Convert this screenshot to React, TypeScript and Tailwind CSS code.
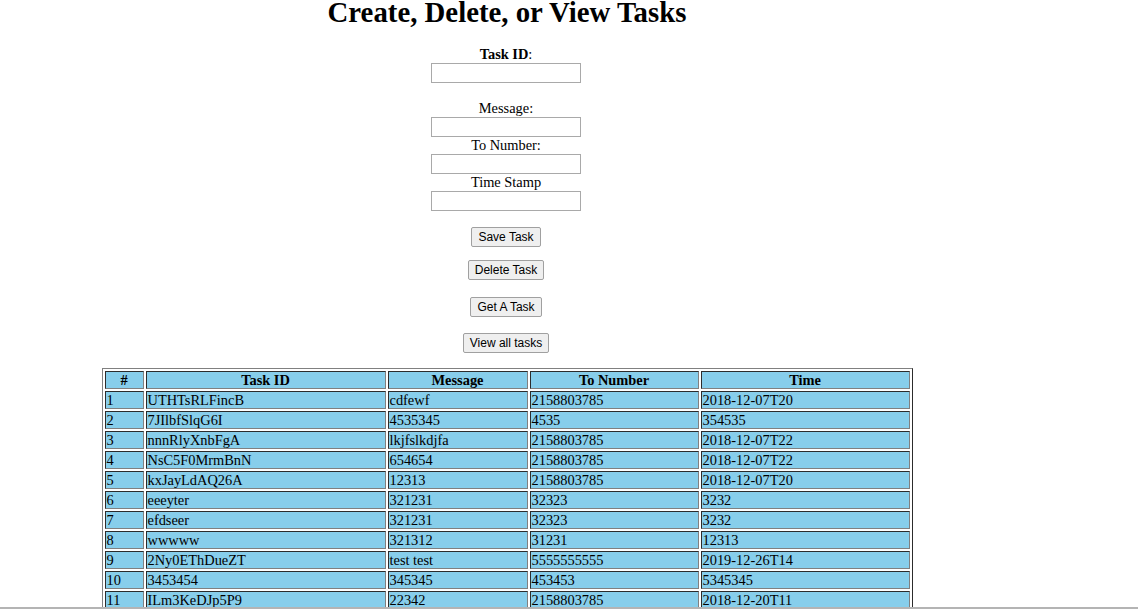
import React from "react"

interface TaskRow {
  id: number
  taskId: string
  message: string
  toNumber: string
  time: string
}

const tasks: TaskRow[] = [
  { id: 1,  taskId: "UTHTsRLFincB", message: "cdfewf",      toNumber: "2158803785", time: "2018-12-07T20" },
  { id: 2,  taskId: "7JIlbfSlqG6I", message: "4535345",     toNumber: "4535",       time: "354535" },
  { id: 3,  taskId: "nnnRlyXnbFgA", message: "lkjfslkdjfa", toNumber: "2158803785", time: "2018-12-07T22" },
  { id: 4,  taskId: "NsC5F0MrmBnN", message: "654654",      toNumber: "2158803785", time: "2018-12-07T22" },
  { id: 5,  taskId: "kxJayLdAQ26A", message: "12313",       toNumber: "2158803785", time: "2018-12-07T20" },
  { id: 6,  taskId: "eeeyter",      message: "321231",      toNumber: "32323",      time: "3232" },
  { id: 7,  taskId: "efdseer",      message: "321231",      toNumber: "32323",      time: "3232" },
  { id: 8,  taskId: "wwwww",        message: "321312",      toNumber: "31231",      time: "12313" },
  { id: 9,  taskId: "2Ny0EThDueZT", message: "test test",   toNumber: "5555555555", time: "2019-12-26T14" },
  { id: 10, taskId: "3453454",      message: "345345",      toNumber: "453453",     time: "5345345" },
  { id: 11, taskId: "ILm3KeDJp5P9", message: "22342",       toNumber: "2158803785", time: "2018-12-20T11" },
]

const cell = "border border-[#808080] [border-style:inset] bg-[#87ceeb] px-px py-0 h-[18px] leading-[16px] text-left"
const head = "border border-[#808080] [border-style:inset] bg-[#87ceeb] px-px py-0 h-[18px] leading-[16px] text-center font-bold"

const Field = ({ label, bold }: { label: string; bold?: boolean }) => (
  <div className="flex flex-col items-center">
    <div className="h-[17px] leading-[17px]">
      {bold ? (<><b>{label}</b>:</>) : label}
    </div>
    <input className="w-[150px] h-[20px] border border-[#a9a9a9] bg-white" />
  </div>
)

const Btn = ({ label, className }: { label: string; className?: string }) => (
  <button
    className={`h-[20px] px-[6px] leading-[14px] text-[12px] text-black bg-[#efefef] border border-[#a0a0a0] rounded-[2px] font-['Liberation_Sans',Arial,sans-serif] ${className ?? ""}`}
  >
    {label}
  </button>
)

export default function App() {
  return (
    <div className="min-h-screen bg-white text-black font-['Liberation_Serif','Times_New_Roman',serif] text-[14.4px]">
      <div className="w-[1012px] flex flex-col items-center">

        {/* Title */}
        <h1 className="text-[28.8px] font-bold leading-[24px] m-0 ml-[2px]">Create, Delete, or View Tasks</h1>

        {/* Form */}
        <div className="mt-[22px] flex flex-col items-center">
          <Field label="Task ID" bold />
          <div className="mt-[17px]"><Field label="Message:" /></div>
          <Field label="To Number:" />
          <Field label="Time Stamp" />
        </div>

        {/* Buttons */}
        <Btn label="Save Task" className="mt-[16px]" />
        <Btn label="Delete Task" className="mt-[13px]" />
        <Btn label="Get A Task" className="mt-[17px]" />
        <Btn label="View all tasks" className="mt-[16px]" />

        {/* Tasks table */}
        <table className="mt-[15px] ml-[2px] table-fixed w-[811px] border-separate border-spacing-[2px] border border-[#808080] [border-style:outset]">
          <thead>
            <tr>
              <th className={`${head} w-[39px]`}>#</th>
              <th className={`${head} w-[240px]`}>Task ID</th>
              <th className={`${head} w-[140px]`}>Message</th>
              <th className={`${head} w-[169px]`}>To Number</th>
              <th className={`${head} w-[209px]`}>Time</th>
            </tr>
          </thead>
          <tbody>
            {tasks.map((t) => (
              <tr key={t.id}>
                <td className={cell}>{t.id}</td>
                <td className={cell}>{t.taskId}</td>
                <td className={cell}>{t.message}</td>
                <td className={cell}>{t.toNumber}</td>
                <td className={cell}>{t.time}</td>
              </tr>
            ))}
          </tbody>
        </table>
      </div>

      {/* window bottom edge */}
      <div className="fixed left-0 right-0 bottom-0 h-[6px] bg-white border-t-2 border-[#b4b4b4]" />
    </div>
  )
}
